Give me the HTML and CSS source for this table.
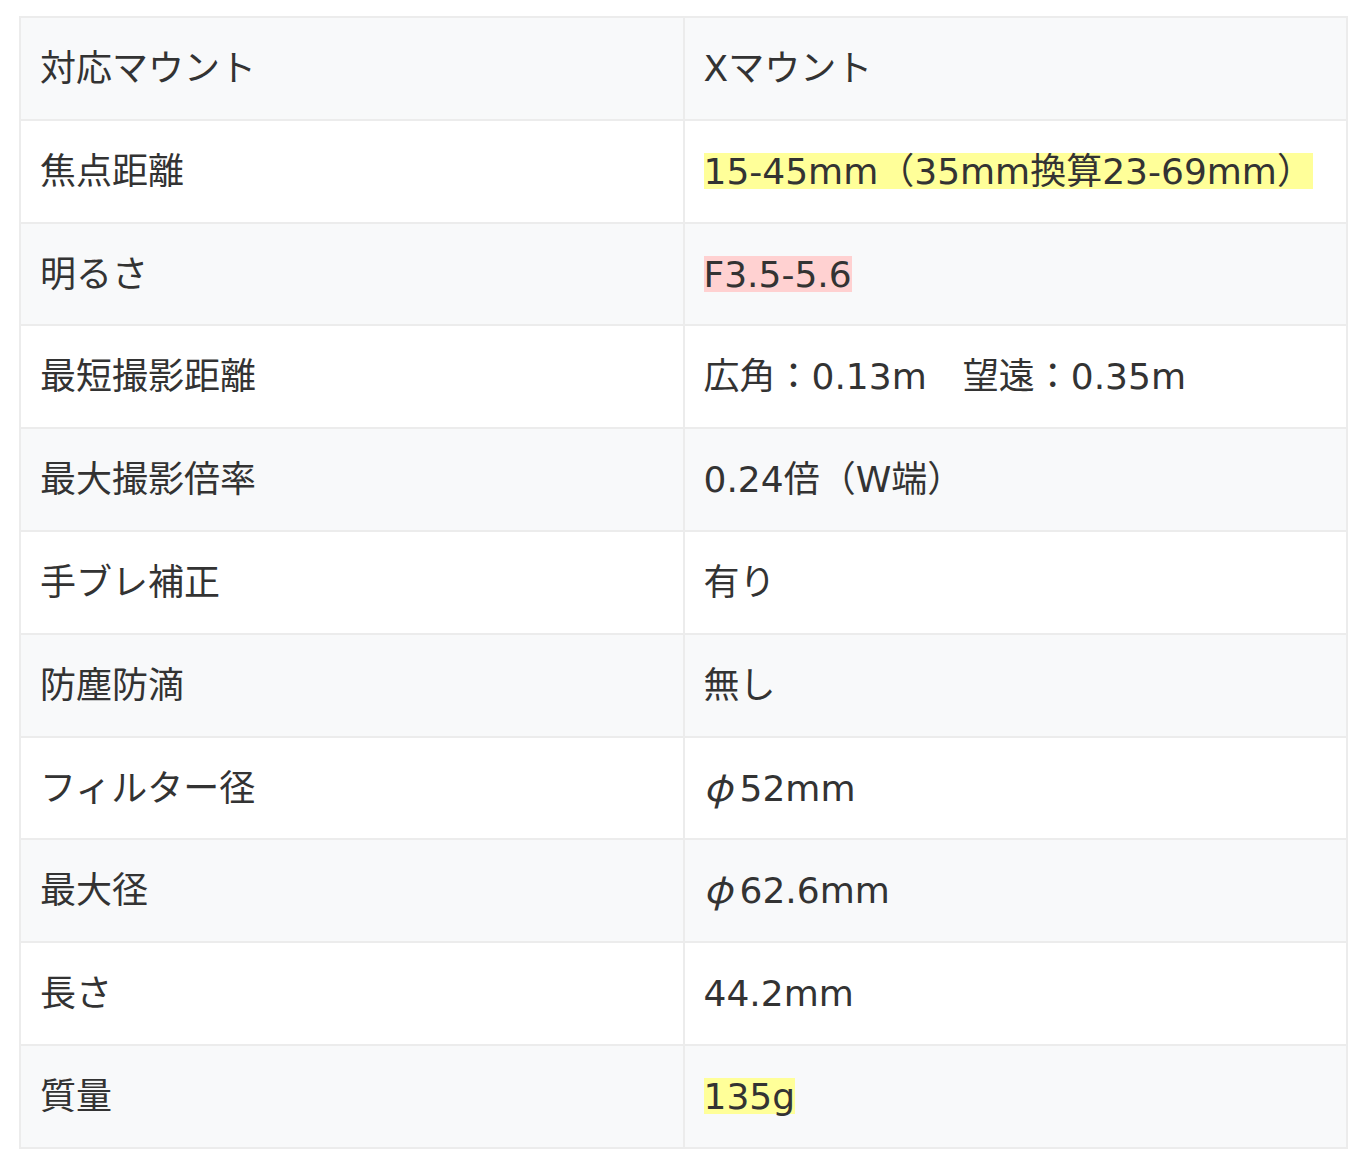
FILE: index.html
```html
<!DOCTYPE html>
<html lang="ja">
<head>
<meta charset="utf-8">
<title>スペック</title>
<link rel="stylesheet" href="styles.css">
</head>
<body>
<div class="wrap">
<table class="spec">
<tbody>
<tr><td>対応マウント</td><td>Xマウント</td></tr>
<tr><td>焦点距離</td><td><span class="mark-y">15-45mm（35mm換算23-69mm）</span></td></tr>
<tr><td>明るさ</td><td><span class="mark-p">F3.5-5.6</span></td></tr>
<tr><td>最短撮影距離</td><td>広角：0.13m　望遠：0.35m</td></tr>
<tr><td>最大撮影倍率</td><td>0.24倍（W端）</td></tr>
<tr><td>手ブレ補正</td><td>有り</td></tr>
<tr><td>防塵防滴</td><td>無し</td></tr>
<tr><td>フィルター径</td><td><span class="phi">φ</span>52mm</td></tr>
<tr><td>最大径</td><td><span class="phi">φ</span>62.6mm</td></tr>
<tr><td>長さ</td><td>44.2mm</td></tr>
<tr><td>質量</td><td><span class="mark-y">135g</span></td></tr>
</tbody>
</table>
</div>
</body>
</html>
```
FILE: styles.css
```css
html, body {
  margin: 0;
  padding: 0;
  background: #ffffff;
}
.wrap {
  padding: 16px 0 0 19px;
}
.spec {
  width: 1329px;
  border-collapse: collapse;
  table-layout: fixed;
  border: 2px solid #ececec;
  font-family: "DejaVu Sans", "Noto Sans CJK JP", sans-serif;
  font-size: 36px;
  color: #333333;
}
.spec td {
  width: 50%;
  height: 60.8px;
  border: 2px solid #ececec;
  padding: 21px 19px 19px;
  line-height: 60.8px;
  vertical-align: middle;
  white-space: nowrap;
}
.spec tr:nth-child(odd) td {
  background: #f8f9fa;
}
.mark-y {
  background: linear-gradient(#ffff99, #ffff99) center / 100% 36px no-repeat;
}
.mark-p {
  background: linear-gradient(#ffd1d1, #ffd1d1) center / 100% 36px no-repeat;
}
.phi {
  display: inline-block;
  width: 36px;
  line-height: 1;
  font-family: "Noto Sans CJK JP", sans-serif;
  font-style: italic;
  font-size: 38px;
  text-align: left;
}
```
